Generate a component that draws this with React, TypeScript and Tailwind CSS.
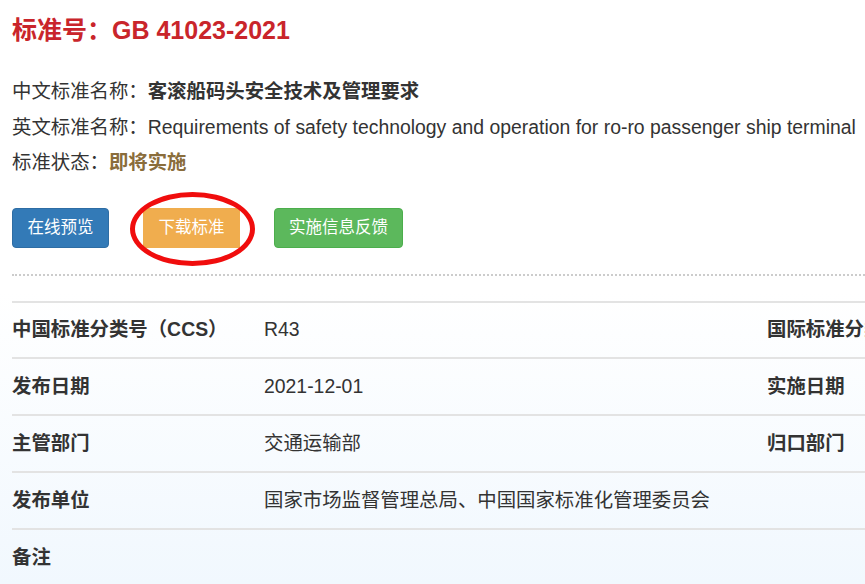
import React from "react";

const FONT = { fontFamily: '"Liberation Sans", Arial, "Noto Sans CJK SC", sans-serif' };

const rows: { label: string; value: string; label2?: string }[] = [
  { label: "中国标准分类号（CCS）", value: "R43", label2: "国际标准分类号（ICS）" },
  { label: "发布日期", value: "2021-12-01", label2: "实施日期" },
  { label: "主管部门", value: "交通运输部", label2: "归口部门" },
  { label: "发布单位", value: "国家市场监督管理总局、中国国家标准化管理委员会" },
  { label: "备注", value: "" },
];

export default function App() {
  return (
    <div
      style={FONT}
      className="w-[865px] h-[584px] overflow-hidden bg-gradient-to-b from-white from-50% to-[#f1f8fe] text-[#333] pl-3"
    >
      <h1 className="text-[25px] font-bold text-[#c9252b] pt-[14px] leading-[32px]">
        标准号：GB 41023-2021
      </h1>

      <div className="mt-[28px] text-[19.4px] leading-[35.5px] whitespace-nowrap">
        <div>
          中文标准名称：<span className="font-bold">客滚船码头安全技术及管理要求</span>
        </div>
        <div>
          英文标准名称：Requirements of safety technology and operation for ro-ro passenger ship terminal
        </div>
        <div>
          标准状态：<span className="font-bold text-[#8a6d3b]">即将实施</span>
        </div>
      </div>

      <div className="mt-[27px] flex gap-[34px] text-[16.5px] text-white">
        <button className="w-[97px] h-[40px] rounded bg-[#337ab7] border border-[#2e6da4]">在线预览</button>
        <div className="relative">
          <button className="w-[97px] h-[40px] bg-[#f0ad4e]">下载标准</button>
          <div className="absolute left-[-13px] top-[-16px] w-[125px] h-[74px] rounded-[50%] border-[5px] border-[#f00d0d]" />
        </div>
        <button className="w-[129px] h-[40px] rounded bg-[#5cb85c] border border-[#4cae4c]">实施信息反馈</button>
      </div>

      <div className="mt-[26px] border-t-2 border-dotted border-[#ccc]" />

      <div className="mt-[25px] border-t-2 border-[#e3e3e3] text-[19.4px]">
        {rows.map((r) => (
          <div key={r.label} className="flex items-center h-[56.8px] border-b-2 border-[#e3e3e3] whitespace-nowrap">
            <div className="w-[252px] shrink-0 font-bold">{r.label}</div>
            <div className="w-[503px] shrink-0">{r.value}</div>
            {r.label2 && <div className="shrink-0 font-bold">{r.label2}</div>}
          </div>
        ))}
      </div>
    </div>
  );
}
